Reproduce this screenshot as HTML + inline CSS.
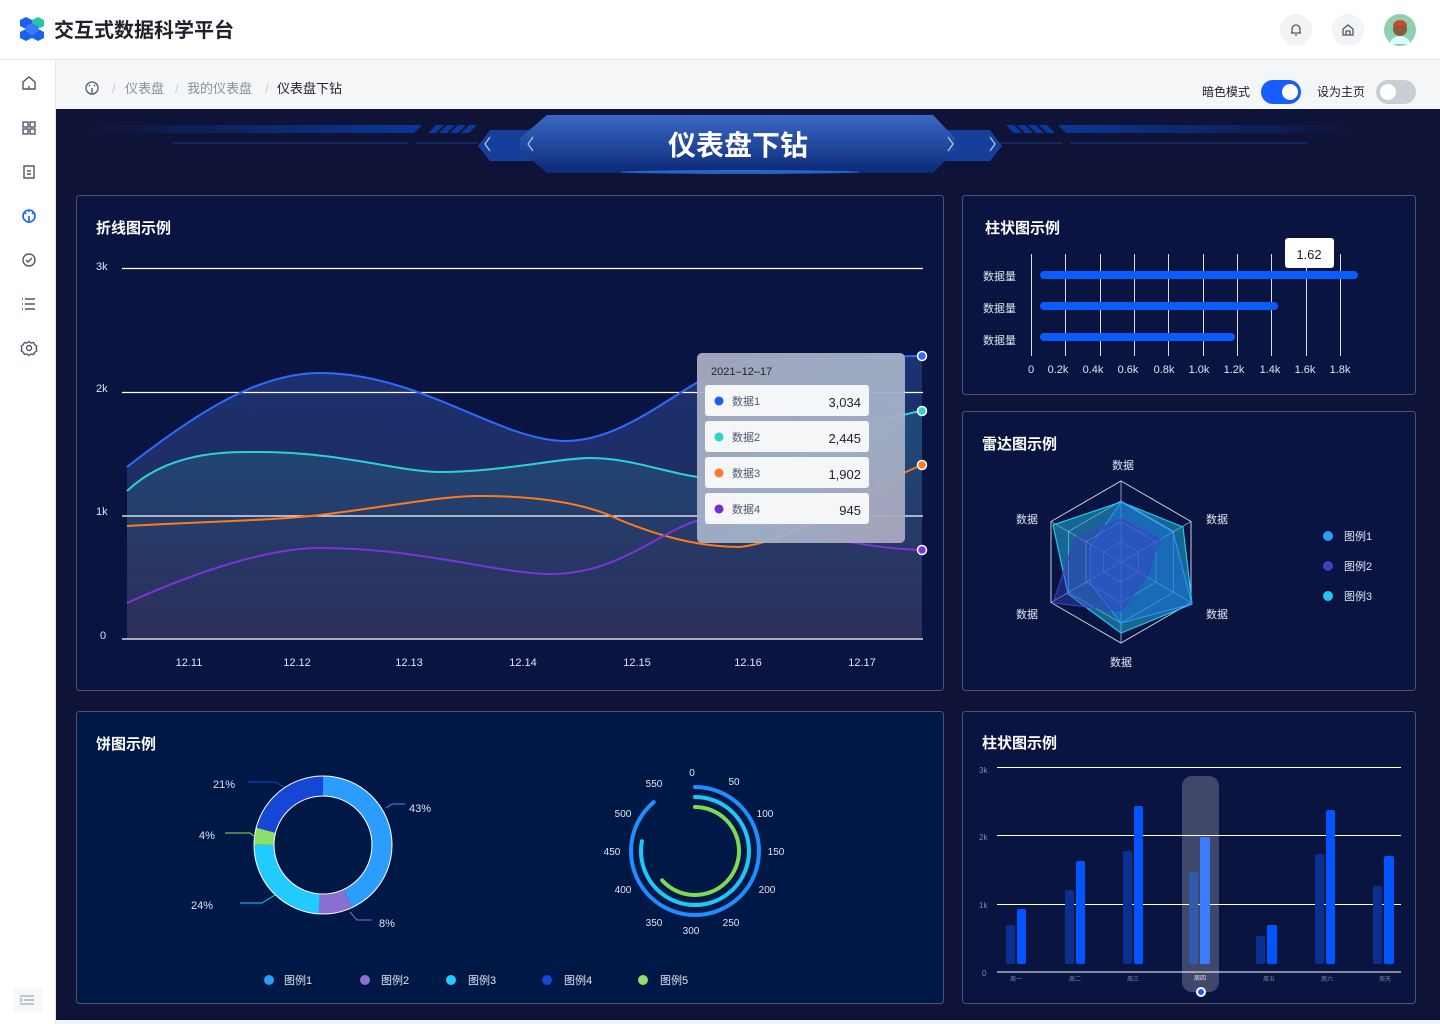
<!DOCTYPE html>
<html><head><meta charset="utf-8">
<style>
*{margin:0;padding:0;box-sizing:border-box}
body{width:1440px;height:1024px;overflow:hidden;font-family:"Liberation Sans","Noto Sans CJK SC",sans-serif;background:#101338;position:relative}
.hdr{position:absolute;left:0;top:0;width:1440px;height:60px;background:#fff;border-bottom:1px solid #e5e6eb}
.side{position:absolute;left:0;top:60px;width:56px;height:964px;background:#fff;border-right:1px solid #e5e6eb}
.bc{position:absolute;left:56px;top:60px;width:1384px;height:49px;background:#f5f6f8}
svg text{font-family:"Liberation Sans","Noto Sans CJK SC",sans-serif}
</style></head><body>
<div class="hdr"></div>
<div class="side"></div>
<div class="bc"></div>
<svg width="1440" height="1024" style="position:absolute;left:0;top:0">
<defs>
<linearGradient id="ban" x1="0" y1="0" x2="0" y2="1"><stop offset="0" stop-color="#3b69c5"/><stop offset="1" stop-color="#0b2a78"/></linearGradient>
<linearGradient id="lb" x1="0" y1="0" x2="1" y2="0"><stop offset="0" stop-color="#101338"/><stop offset="1" stop-color="#0a3898"/></linearGradient>
<linearGradient id="rb" x1="1" y1="0" x2="0" y2="0"><stop offset="0" stop-color="#101338"/><stop offset="1" stop-color="#0a3898"/></linearGradient>
<linearGradient id="ar" x1="0" y1="0" x2="0" y2="1"><stop offset="0" stop-color="#2a4a9a" stop-opacity=".55"/><stop offset="1" stop-color="#3a3a6a" stop-opacity=".5"/></linearGradient>
<linearGradient id="ar2" x1="0" y1="0" x2="0" y2="1"><stop offset="0" stop-color="#1e7a9a" stop-opacity=".35"/><stop offset="1" stop-color="#403a5e" stop-opacity=".35"/></linearGradient>
<linearGradient id="tt" x1="0" y1="0" x2="1" y2="1"><stop offset="0" stop-color="#a6abc0"/><stop offset=".6" stop-color="#a3b2c8"/><stop offset="1" stop-color="#aaa7be"/></linearGradient>
</defs>
<!-- header -->
<g transform="translate(20,17)">
<polygon points="6,0 12,3 12,9 6,12 0,9 0,3" fill="#1e5ef0"/>
<polygon points="18,0 24,3 24,9 18,12 12,9 12,3" fill="#25c8a0"/>
<polygon points="6,12 12,15 12,21 6,24 0,21 0,15" fill="#1e5ef0"/>
<polygon points="18,12 24,15 24,21 18,24 12,21 12,15" fill="#1e5ef0"/>
<polygon points="12,6 18,9 18,15 12,18 6,15 6,9" fill="#3a7bff"/>
</g>
<text x="54" y="37" font-size="20" font-weight="bold" fill="#1d2129">交互式数据科学平台</text>
<circle cx="1296" cy="30" r="16" fill="#f2f3f5"/>
<path d="M1291 33h10M1292 33v-4a4 4 0 0 1 8 0v4M1295 35h2" stroke="#4e5969" stroke-width="1.3" fill="none"/>
<circle cx="1348" cy="30" r="16" fill="#f2f3f5"/>
<path d="M1343 35v-6l5-4 5 4v6zM1346 35v-4h4v4" stroke="#4e5969" stroke-width="1.3" fill="none"/>
<circle cx="1400" cy="30" r="16" fill="#8fd0b0"/>
<circle cx="1400" cy="29" r="7" fill="#8a5a3a"/>
<path d="M1393 26a7 6 0 0 1 14 0z" fill="#c94a30"/>
<path d="M1390 44a10 8 0 0 1 20 0z" fill="#dff"/>
<!-- sidebar icons -->
<g stroke="#4e5969" stroke-width="1.4" fill="none">
<path d="M23 89v-7l6-5 6 5v7zM29 89v-3"/>
<rect x="23" y="122" width="5" height="5"/><rect x="30" y="122" width="5" height="5"/><rect x="23" y="129" width="5" height="5"/><rect x="30" y="129" width="5" height="5"/>
<path d="M24 166h10v12h-10zM27 171h4M27 174h4"/>
<circle cx="29" cy="260" r="6"/><path d="M26 260l2 2 4-4"/>
<path d="M25 299h10M25 304h10M25 309h10M22 299h1M22 304h1M22 309h1"/>
<circle cx="29" cy="348" r="2.5"/><path d="M29 341.5l2 1.5 2.5-.5 1.2 2.2 2 1.5-.5 2.3.5 2.3-2 1.5-1.2 2.2-2.5-.5-2 1.5-2-1.5-2.5.5-1.2-2.2-2-1.5.5-2.3-.5-2.3 2-1.5 1.2-2.2 2.5.5z"/>
<path d="M20 996h14M24 1000h10M20 1004h14M20 998l2 2-2 2"/>
</g>
<rect x="14" y="988" width="28" height="24" fill="#f2f3f5" opacity=".6"/>
<g stroke="#165dff" stroke-width="1.6" fill="none"><circle cx="29" cy="216" r="6"/><path d="M29 216v5M27 222h4M25 213l1 1M33 213l-1 1M29 211v1"/></g>
<!-- breadcrumb -->
<g stroke="#4e5969" stroke-width="1.3" fill="none"><circle cx="92" cy="88" r="6"/><path d="M92 88v5M90 94h4M89 85l1 1M95 85l-1 1"/></g>
<text x="112" y="93" font-size="13" fill="#c9cdd4">/</text>
<text x="125" y="93" font-size="13" fill="#86909c">仪表盘</text>
<text x="175" y="93" font-size="13" fill="#c9cdd4">/</text>
<text x="187" y="93" font-size="13" fill="#86909c">我的仪表盘</text>
<text x="265" y="93" font-size="13" fill="#c9cdd4">/</text>
<text x="277" y="93" font-size="13" fill="#1d2129">仪表盘下钻</text>
<text x="1202" y="96" font-size="12" fill="#1d2129">暗色模式</text>
<rect x="1261" y="80" width="40" height="24" rx="12" fill="#165dff"/><circle cx="1290" cy="92" r="8" fill="#fff"/>
<text x="1317" y="96" font-size="12" fill="#1d2129">设为主页</text>
<rect x="1376" y="80" width="40" height="24" rx="12" fill="#c9cdd4"/><circle cx="1388" cy="92" r="8" fill="#fff"/>
<!-- main bg -->
<rect x="56" y="109" width="1384" height="911" fill="#101338"/>
<!-- banner -->
<polygon points="85,125 422,125 414,133 85,133" fill="url(#lb)"/>
<g fill="#0a3a9a"><polygon points="436,125 444,125 436,133 428,133"/><polygon points="447,125 455,125 447,133 439,133"/><polygon points="458,125 466,125 458,133 450,133"/><polygon points="469,125 477,125 469,133 461,133"/></g>
<polygon points="1355,125 1058,125 1066,133 1355,133" fill="url(#rb)"/>
<g fill="#0a3a9a"><polygon points="1006,125 1014,125 1022,133 1014,133"/><polygon points="1017,125 1025,125 1033,133 1025,133"/><polygon points="1028,125 1036,125 1044,133 1036,133"/><polygon points="1039,125 1047,125 1055,133 1047,133"/></g>
<path d="M173 143H408M416 143H478M1000 143H1062M1070 143H1307" stroke="#0f3b8c" stroke-width="1"/>
<polygon points="490,130 545,130 545,161 490,161 478,146" fill="#153f9a"/>
<polygon points="945,130 990,130 1002,146 990,161 945,161" fill="#153f9a"/>
<polygon points="547,115 933,115 955,138 955,150 933,173 547,173 520,150 520,138" fill="url(#ban)"/>
<ellipse cx="740" cy="172" rx="120" ry="2" fill="#3a8cff" opacity=".6"/>
<g stroke="#b8c8ee" stroke-width="1.2" fill="none"><path d="M490 137l-5 7 5 7M533 137l-5 7 5 7M948 137l5 7-5 7M990 137l5 7-5 7"/></g>
<text x="738" y="155" font-size="28" font-weight="bold" fill="#fff" text-anchor="middle">仪表盘下钻</text>
<!-- cards -->
<g fill="#0a1440" stroke="#4a5278" stroke-width="1">
<rect x="76.5" y="195.5" width="867" height="495" rx="3"/>
<rect x="962.5" y="195.5" width="453" height="199" rx="3"/>
<rect x="962.5" y="411.5" width="453" height="279" rx="3"/>
<rect x="76.5" y="711.5" width="867" height="292" rx="3" fill="#001845"/>
<rect x="962.5" y="711.5" width="453" height="292" rx="3"/>
</g>
<g font-size="15" fill="#fff" font-weight="bold">
<text x="96" y="233">折线图示例</text>
<text x="985" y="233">柱状图示例</text>
<text x="982" y="449">雷达图示例</text>
<text x="96" y="749">饼图示例</text>
<text x="982" y="748">柱状图示例</text>
</g>
<!-- line chart -->
<g font-size="11" fill="#e0e4f0">
<text x="96" y="270">3k</text><text x="96" y="392">2k</text><text x="96" y="515">1k</text><text x="100" y="639">0</text>
</g>
<path d="M127 467C200 410 260 373 320 373C420 373 500 441 565 441C640 441 700 360 760 360C840 360 880 356 922 356V639H127Z" fill="url(#ar)"/>
<path d="M127 491C170 450 230 452 260 452C340 452 400 472 440 472C500 472 560 458 590 458C640 458 680 480 720 478C800 470 860 420 922 411V639H127Z" fill="url(#ar2)"/>
<g stroke="#fff" stroke-width="1.2"><path d="M122 268.5H923M122 392.5H923M122 516H923M122 639H923"/></g>
<g fill="none" stroke-width="2">
<path d="M127 467C200 410 260 373 320 373C420 373 500 441 565 441C640 441 700 360 760 360C840 360 880 356 922 356" stroke="#2f6bff"/>
<path d="M127 491C170 450 230 452 260 452C340 452 400 472 440 472C500 472 560 458 590 458C640 458 680 480 720 478C800 470 860 420 922 411" stroke="#2ed3d0"/>
<path d="M127 526C200 522 280 520 320 515C400 505 440 496 480 496C560 496 600 510 620 520C680 545 720 547 740 547C800 540 860 490 922 465" stroke="#ff7a1a"/>
<path d="M127 603C200 570 270 548 320 548C420 548 500 574 550 574C620 574 660 530 700 520C780 520 840 548 922 550" stroke="#7a35d9"/>
</g>
<g stroke="#fff" stroke-width="1.5"><circle cx="922" cy="356" r="4.5" fill="#2f6bff"/><circle cx="922" cy="411" r="4.5" fill="#2ed3d0"/><circle cx="922" cy="465" r="4.5" fill="#ff7a1a"/><circle cx="922" cy="550" r="4.5" fill="#7a35d9"/></g>
<g font-size="11" fill="#e0e4f0" text-anchor="middle">
<text x="189" y="666">12.11</text><text x="297" y="666">12.12</text><text x="409" y="666">12.13</text><text x="523" y="666">12.14</text><text x="637" y="666">12.15</text><text x="748" y="666">12.16</text><text x="862" y="666">12.17</text>
</g>
<rect x="697" y="353" width="208" height="190" rx="5" fill="url(#tt)" opacity=".95"/>
<text x="711" y="375" font-size="11" fill="#1d2129">2021–12–17</text>
<g font-size="11">
<rect x="705" y="385" width="164" height="31" rx="3" fill="#f5f6f8"/><circle cx="719" cy="401" r="4.5" fill="#165dff"/><text x="732" y="405" fill="#4e5969">数据1</text><text x="861" y="407" text-anchor="end" font-size="13" fill="#1d2129">3,034</text>
<rect x="705" y="421" width="164" height="31" rx="3" fill="#f5f6f8"/><circle cx="719" cy="437" r="4.5" fill="#2ed3c8"/><text x="732" y="441" fill="#4e5969">数据2</text><text x="861" y="443" text-anchor="end" font-size="13" fill="#1d2129">2,445</text>
<rect x="705" y="457" width="164" height="31" rx="3" fill="#f5f6f8"/><circle cx="719" cy="473" r="4.5" fill="#ff7a2e"/><text x="732" y="477" fill="#4e5969">数据3</text><text x="861" y="479" text-anchor="end" font-size="13" fill="#1d2129">1,902</text>
<rect x="705" y="493" width="164" height="31" rx="3" fill="#f5f6f8"/><circle cx="719" cy="509" r="4.5" fill="#722ed1"/><text x="732" y="513" fill="#4e5969">数据4</text><text x="861" y="515" text-anchor="end" font-size="13" fill="#1d2129">945</text>
</g>
<!-- horizontal bars -->
<g stroke="#fff" stroke-width="1" opacity=".85"><path d="M1031.5 254V356M1065.5 254V356M1100.5 254V356M1134.5 254V356M1168.5 254V356M1203.5 254V356M1237.5 254V356M1271.5 254V356M1306.5 254V356M1340.5 254V356"/></g>
<g stroke="#0a5cff" stroke-width="8" stroke-linecap="round"><path d="M1044 275H1354M1044 306H1274M1044 337H1231"/></g>
<g font-size="11" fill="#e0e4f0"><text x="983" y="280">数据量</text><text x="983" y="312">数据量</text><text x="983" y="344">数据量</text></g>
<g font-size="11" fill="#e0e4f0" text-anchor="middle"><text x="1031" y="373">0</text><text x="1058" y="373">0.2k</text><text x="1093" y="373">0.4k</text><text x="1128" y="373">0.6k</text><text x="1164" y="373">0.8k</text><text x="1199" y="373">1.0k</text><text x="1234" y="373">1.2k</text><text x="1270" y="373">1.4k</text><text x="1305" y="373">1.6k</text><text x="1340" y="373">1.8k</text></g>
<rect x="1285" y="238" width="49" height="30" rx="3" fill="#fff"/>
<text x="1309" y="259" font-size="13" fill="#1d2129" text-anchor="middle">1.62</text>
<!-- radar -->
<g stroke="#c8cee0" stroke-width="1" fill="none">
<polygon points="1121,481 1191,521.5 1191,602.5 1121,643 1051,602.5 1051,521.5"/>
<polygon points="1121,501 1173.5,531.5 1173.5,592.5 1121,623 1068.5,592.5 1068.5,531.5" opacity=".7"/>
<polygon points="1121,521.5 1156,541.75 1156,582.25 1121,602.5 1086,582.25 1086,541.75" opacity=".7"/>
<polygon points="1121,542 1138.5,552 1138.5,572 1121,582 1103.5,572 1103.5,552" opacity=".7"/>
<path d="M1121 481V643M1051 521.5L1191 602.5M1191 521.5L1051 602.5" opacity=".7"/>
</g>
<polygon points="1121,502 1183,527 1192,604 1121,633 1068,594 1053,525" fill="#23b8e6" fill-opacity=".5" stroke="#23c8f0" stroke-width="1.2"/>
<polygon points="1121,502 1173,532 1192,604 1121,623 1090,583 1090,547" fill="#1e6fd9" fill-opacity=".5" stroke="#2a9dff" stroke-width="1"/>
<polygon points="1121,519 1160,539 1147,576 1121,611 1053,603 1075,538" fill="#3a3fc4" fill-opacity=".45" stroke="#3b43c9" stroke-width="1"/>
<g font-size="11" fill="#e0e4f0" text-anchor="middle"><text x="1123" y="469">数据</text><text x="1027" y="523">数据</text><text x="1217" y="523">数据</text><text x="1027" y="618">数据</text><text x="1217" y="618">数据</text><text x="1121" y="666">数据</text></g>
<circle cx="1328" cy="536" r="5" fill="#2a9dff"/><circle cx="1328" cy="566" r="5" fill="#3a3fc4"/><circle cx="1328" cy="596" r="5" fill="#1fc7f5"/>
<g font-size="11" fill="#e0e4f0"><text x="1344" y="540">图例1</text><text x="1344" y="570">图例2</text><text x="1344" y="600">图例3</text></g>
<!-- pie -->
<g transform="rotate(-90 323 845)" fill="none" stroke-width="20">
<circle cx="323" cy="845" r="59" stroke="#2a9dff" stroke-dasharray="159.4 400" stroke-dashoffset="0"/>
<circle cx="323" cy="845" r="59" stroke="#8a6fd1" stroke-dasharray="29.7 400" stroke-dashoffset="-159.4"/>
<circle cx="323" cy="845" r="59" stroke="#22cbff" stroke-dasharray="89 400" stroke-dashoffset="-189.1"/>
<circle cx="323" cy="845" r="59" stroke="#8de06b" stroke-dasharray="14.8 400" stroke-dashoffset="-278.1"/>
<circle cx="323" cy="845" r="59" stroke="#1546d6" stroke-dasharray="77.8 400" stroke-dashoffset="-292.9"/>
</g>
<circle cx="323" cy="845" r="69" fill="none" stroke="#fff" stroke-width="1"/>
<circle cx="323" cy="845" r="49" fill="none" stroke="#fff" stroke-width="1"/>
<g fill="none" stroke-width="1"><path d="M284 787L275 782H248" stroke="#1546d6"/><path d="M386 808L392 804H405" stroke="#2a9dff"/><path d="M255 837L250 833H225" stroke="#8de06b"/><path d="M275 895L262 903H240" stroke="#22cbff"/><path d="M350 912L357 920H372" stroke="#8a6fd1"/></g>
<g font-size="11" fill="#e0e4f0"><text x="213" y="788">21%</text><text x="409" y="812">43%</text><text x="199" y="839">4%</text><text x="191" y="909">24%</text><text x="379" y="927">8%</text></g>
<!-- rings -->
<g transform="rotate(-90 695 851)" fill="none" stroke-width="4" stroke-linecap="round">
<circle cx="695" cy="851" r="64" stroke="#1e8fff" stroke-dasharray="357 500"/>
<circle cx="695" cy="851" r="54" stroke="#1fc7f5" stroke-dasharray="264 500"/>
<circle cx="695" cy="851" r="44" stroke="#7ed957" stroke-dasharray="175 500"/>
</g>
<g font-size="10" fill="#e0e4f0" text-anchor="middle"><text x="692" y="776">0</text><text x="734" y="785">50</text><text x="765" y="817">100</text><text x="776" y="855">150</text><text x="767" y="893">200</text><text x="731" y="926">250</text><text x="691" y="934">300</text><text x="654" y="926">350</text><text x="623" y="893">400</text><text x="612" y="855">450</text><text x="623" y="817">500</text><text x="654" y="787">550</text></g>
<!-- pie legend -->
<g font-size="11" fill="#e0e4f0">
<circle cx="269" cy="980" r="5" fill="#2a9dff"/><text x="284" y="984">图例1</text>
<circle cx="365" cy="980" r="5" fill="#8a6fd1"/><text x="381" y="984">图例2</text>
<circle cx="451" cy="980" r="5" fill="#22cbff"/><text x="468" y="984">图例3</text>
<circle cx="547" cy="980" r="5" fill="#1546d6"/><text x="564" y="984">图例4</text>
<circle cx="643" cy="980" r="5" fill="#8de06b"/><text x="660" y="984">图例5</text>
</g>
<!-- vertical bars -->
<rect x="1182" y="776" width="37" height="216" rx="10" fill="#fff" fill-opacity=".22"/>
<g stroke="#fff" stroke-width="1"><path d="M997 767.5H1401M997 835.5H1401M997 904.5H1401M997 972H1401"/></g>
<g font-size="8" fill="#8088a8"><text x="979" y="773">3k</text><text x="979" y="840">2k</text><text x="979" y="908">1k</text><text x="982" y="976">0</text></g>
<g fill="#0a2f8f">
<rect x="1006" y="925" width="9" height="39" rx="2"/><rect x="1065" y="890" width="9" height="74" rx="2"/><rect x="1123" y="851" width="9" height="113" rx="2"/><rect x="1189" y="872" width="9" height="92" rx="2" fill="#3359a8"/><rect x="1256" y="936" width="9" height="28" rx="2"/><rect x="1315" y="854" width="9" height="110" rx="2"/><rect x="1373" y="886" width="9" height="78" rx="2"/>
</g>
<g fill="#0055ff">
<rect x="1017" y="909" width="9" height="55" rx="2"/><rect x="1076" y="861" width="9" height="103" rx="2"/><rect x="1134" y="806" width="9" height="158" rx="2"/><rect x="1200" y="837" width="10" height="127" rx="2" fill="#3a7cff"/><rect x="1267" y="925" width="10" height="39" rx="2"/><rect x="1326" y="810" width="9" height="154" rx="2"/><rect x="1384" y="856" width="10" height="108" rx="2"/>
</g>
<g font-size="6" fill="#8088a8" text-anchor="middle"><text x="1016" y="981">周一</text><text x="1075" y="981">周二</text><text x="1133" y="981">周三</text><text x="1200" y="980" fill="#e0e4f0">周四</text><text x="1269" y="981">周五</text><text x="1327" y="981">周六</text><text x="1385" y="981">周天</text></g>
<circle cx="1201" cy="992" r="4" fill="#165dff" stroke="#fff" stroke-width="2"/>
<rect x="56" y="1020" width="1384" height="4" fill="#f2f3f5"/>
</svg>
</body></html>
